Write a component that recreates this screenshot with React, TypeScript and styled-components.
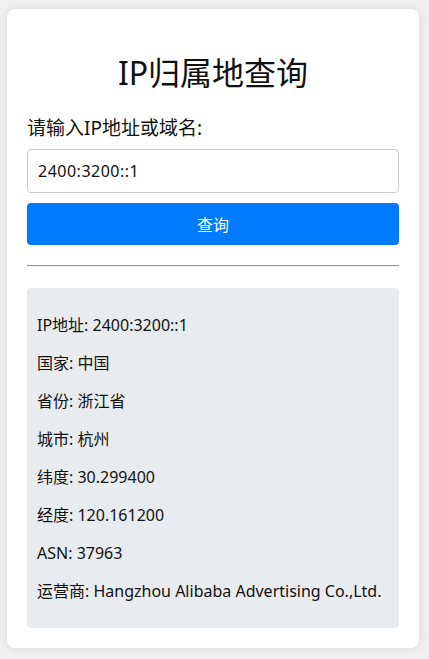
import React, { useState } from 'react';
import styled, { createGlobalStyle } from 'styled-components';

const GlobalStyle = createGlobalStyle`
	body {
		margin: 0;
		background: #f0f0f0;
		font-family: 'Noto Sans', 'Noto Sans CJK SC', sans-serif;
		color: #111;
	}
`;

const Page = styled.div`
	padding: 9px 10px 13px 7px;
`;

const Card = styled.div`
	background: #fff;
	border-radius: 8px;
	box-shadow: 0 0 10px rgba(0, 0, 0, 0.1);
	padding: 20px;
`;

const Title = styled.h1`
	margin: 24px 0 23px;
	text-align: center;
	font-size: 32px;
	line-height: 40px;
	font-weight: 400;
`;

const Label = styled.label`
	display: block;
	font-size: 19px;
	line-height: 24px;
	margin-bottom: 9px;
`;

const Input = styled.input`
	display: block;
	width: 100%;
	height: 44px;
	box-sizing: border-box;
	border: 1px solid #ccc;
	border-radius: 4px;
	padding: 0 10px;
	font-family: inherit;
	font-size: 16px;
	letter-spacing: 0.5px;
	color: #111;
	&:focus {
		outline: none;
	}
`;

const Button = styled.button`
	display: block;
	width: 100%;
	height: 42px;
	margin-top: 10px;
	border: none;
	border-radius: 4px;
	background: #007bff;
	color: #fff;
	font-family: inherit;
	font-size: 16px;
	cursor: pointer;
	&:hover {
		opacity: 0.9;
	}
`;

const Divider = styled.hr`
	margin: 20px 0 21px;
	border: none;
	border-top: 1px solid #999;
	border-bottom: 1px solid #eee;
`;

const Result = styled.div`
	background: #e9ecef;
	border-radius: 4px;
	padding: 10px;
`;

const Line = styled.p`
	margin: 16px 0;
	font-size: 16px;
	line-height: 22px;
	white-space: nowrap;
`;

const info = {
	ip: '2400:3200::1',
	country: '中国',
	region: '浙江省',
	city: '杭州',
	lat: '30.299400',
	lon: '120.161200',
	asn: '37963',
	isp: 'Hangzhou Alibaba Advertising Co.,Ltd.',
};

export default function App() {
	const [query, setQuery] = useState('2400:3200::1');

	return (
		<Page>
			<GlobalStyle />
			<Card>
				<Title>IP归属地查询</Title>
				<Label htmlFor="ip">请输入IP地址或域名:</Label>
				<Input id="ip" type="text" value={query} onChange={(e) => setQuery(e.target.value)} />
				<Button>查询</Button>
				<Divider />
				<Result>
					<Line>IP地址: {info.ip}</Line>
					<Line>国家: {info.country}</Line>
					<Line>省份: {info.region}</Line>
					<Line>城市: {info.city}</Line>
					<Line>纬度: {info.lat}</Line>
					<Line>经度: {info.lon}</Line>
					<Line>ASN: {info.asn}</Line>
					<Line>运营商: {info.isp}</Line>
				</Result>
			</Card>
		</Page>
	);
}
